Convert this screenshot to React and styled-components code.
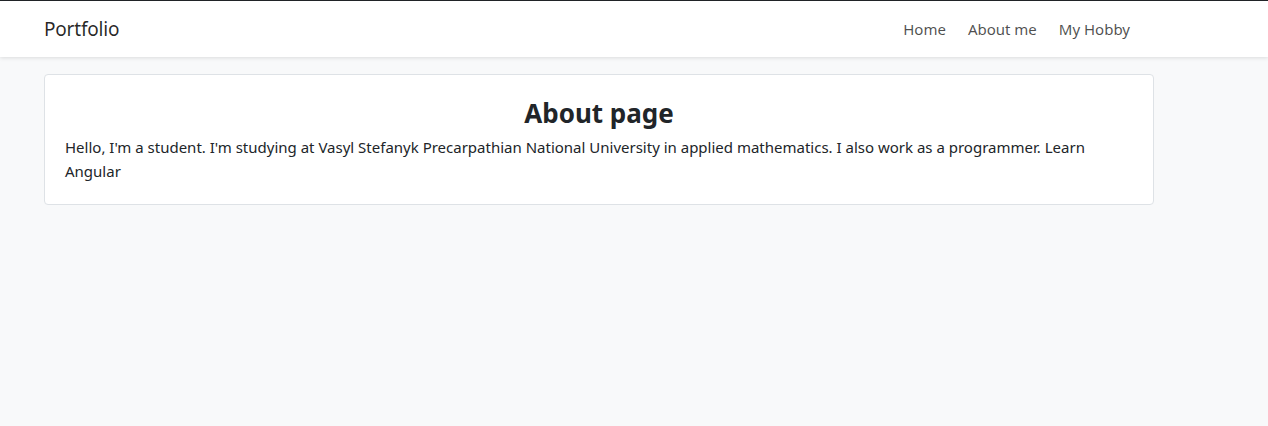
import React from "react";
import styled, { createGlobalStyle } from "styled-components";

const Global = createGlobalStyle`
  html, body { margin: 0; padding: 0; }
  body {
    background: #f8f9fa;
    font-family: "Noto Sans", "Open Sans", sans-serif;
    color: #212529;
    min-height: 426px;
  }
`;

const Page = styled.div`
  min-height: 426px;
  border-top: 1px solid #212529;
  box-sizing: border-box;
`;

const Navbar = styled.nav`
  background: #fff;
  height: 56px;
  box-shadow: 0 1px 4px rgba(0, 0, 0, 0.12);
  display: flex;
  align-items: center;
  padding: 0 44px;
  box-sizing: border-box;
`;

const NavInner = styled.div`
  width: 1110px;
  display: flex;
  align-items: center;
  justify-content: space-between;
`;

const Brand = styled.a`
  font-size: 19px;
  color: rgba(0, 0, 0, 0.85);
  text-decoration: none;
  letter-spacing: -0.2px;
`;

const NavList = styled.div`
  display: flex;
  gap: 22px;
  padding-right: 24px;
`;

const NavLink = styled.a`
  font-size: 15px;
  color: rgba(0, 0, 0, 0.7);
  text-decoration: none;
`;

const Main = styled.main`
  padding: 17px 44px 0;
`;

const Card = styled.section`
  width: 1110px;
  box-sizing: border-box;
  background: #fff;
  border: 1px solid #dee2e6;
  border-radius: 4px;
  padding: 22px 20px 21px;
`;

const Title = styled.h2`
  margin: 0 0 4px;
  text-align: center;
  font-size: 26px;
  font-weight: 700;
  line-height: 1.3;
  color: #212529;
`;

const Text = styled.p`
  margin: 0;
  max-width: 1035px;
  font-size: 15px;
  line-height: 24px;
  color: #212529;
`;

export default function App() {
  return (
    <>
      <Global />
      <Page>
        <Navbar>
          <NavInner>
            <Brand href="#">Portfolio</Brand>
            <NavList>
              <NavLink href="#">Home</NavLink>
              <NavLink href="#">About me</NavLink>
              <NavLink href="#">My Hobby</NavLink>
            </NavList>
          </NavInner>
        </Navbar>
        <Main>
          <Card>
            <Title>About page</Title>
            <Text>
              Hello, I'm a student. I'm studying at Vasyl Stefanyk Precarpathian National University in applied mathematics. I also work as a programmer. Learn Angular
            </Text>
          </Card>
        </Main>
      </Page>
    </>
  );
}
